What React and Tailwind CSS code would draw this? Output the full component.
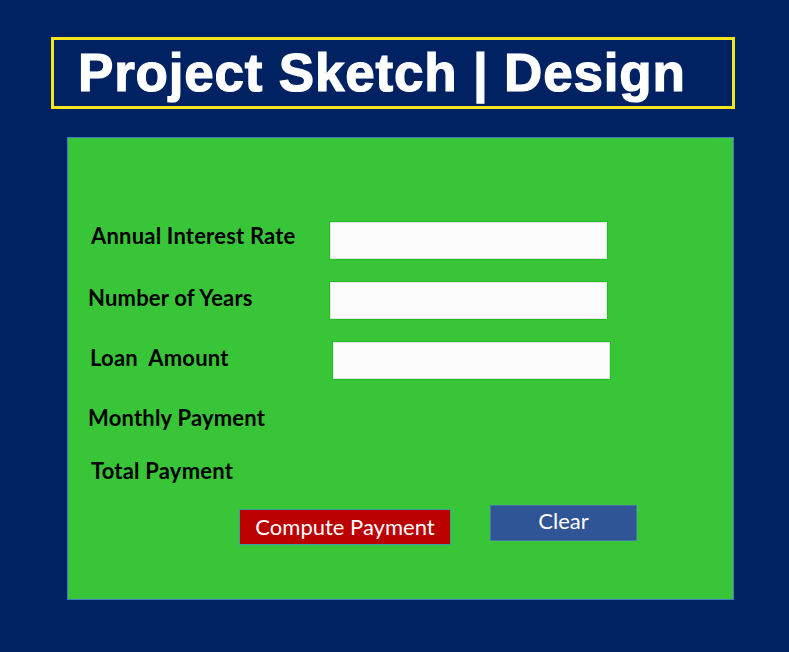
export default function App() {
  const label = "font-bold text-[22px] tracking-[0.2px] text-black leading-none";
  const lf = { fontFamily: "Lato, 'Open Sans', sans-serif" };
  const input = "h-[39px] w-[279px] bg-[#fcfcfc] border border-[#22bf22] shadow-[inset_0_0_0_1px_#e4e4e4]";
  return (
    <div className="w-[789px] h-[652px] bg-[#002262] overflow-hidden pt-[37px]">
      <div className="ml-[51px] w-[684px] h-[72px] border-[3px] border-[#f5e51e] bg-[#002262] flex items-center pl-[24px]">
        <span
          className="text-white font-bold text-[53px] leading-none tracking-[0.8px] mt-[-1px] [-webkit-text-stroke:1.2px_white]"
          style={{ fontFamily: "'Liberation Sans', Arial, sans-serif" }}
        >
          Project Sketch | Design
        </span>
      </div>
      <div className="ml-[67px] mt-[28px] w-[667px] h-[463px] bg-[#38c638] border border-[#3e7cc4] pt-[83px]" style={lf}>
        <div className="flex items-center">
          <div className={`${label} w-[261px] pl-[23px] mt-[-10px]`}>Annual Interest Rate</div>
          <div className={input}></div>
        </div>
        <div className="flex items-center mt-[21px]">
          <div className={`${label} w-[261px] pl-[20px] mt-[-6px]`}>Number of Years</div>
          <div className={input}></div>
        </div>
        <div className="flex items-center mt-[21px]">
          <div className={`${label} w-[264px] pl-[22px] mt-[-6px] whitespace-pre`}>Loan  Amount</div>
          <div className={input}></div>
        </div>
        <div className={`${label} pl-[20px] mt-[27px]`}>Monthly Payment</div>
        <div className={`${label} pl-[23px] mt-[31px]`}>Total Payment</div>
        <div className="flex items-start mt-[23px]">
          <div className="ml-[171px] mt-[4px] w-[212px] h-[36px] bg-[#bb0000] border border-[#3a9cb0] flex items-center justify-center text-white text-[22px] leading-none">
            Compute Payment
          </div>
          <div className="ml-[39px] w-[147px] h-[36px] bg-[#2f5597] border border-[#4a74b0] flex items-center justify-center text-white text-[22px] leading-none pb-[4px]">
            Clear
          </div>
        </div>
      </div>
    </div>
  );
}
